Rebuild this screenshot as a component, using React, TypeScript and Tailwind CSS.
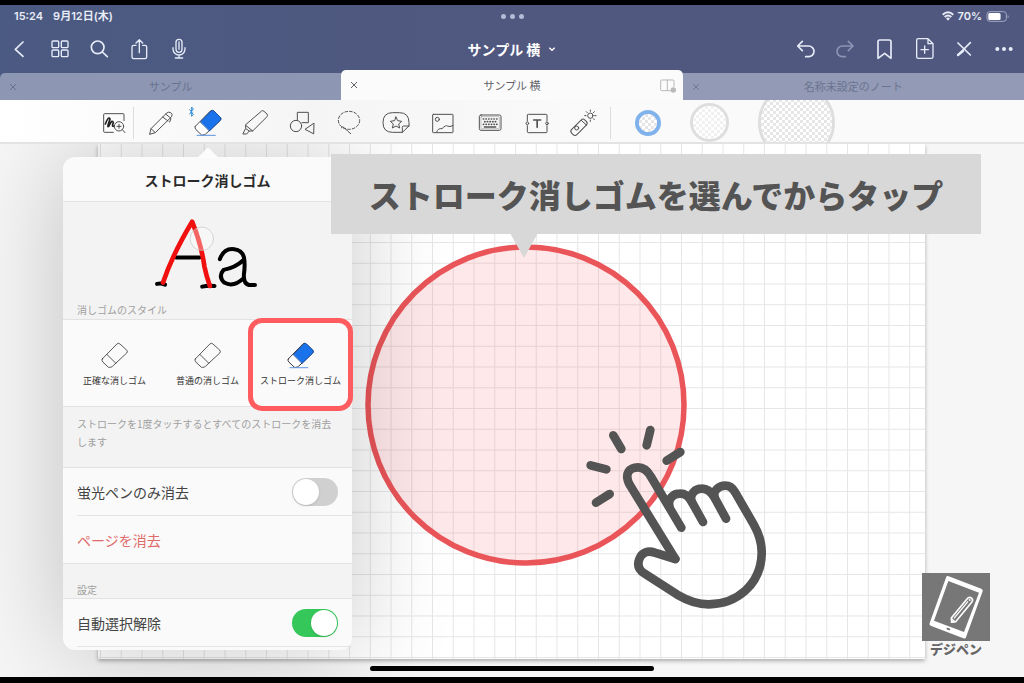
import React from "react";

type IconProps = { box: string; className?: string; children: React.ReactNode; width?: number };

function Icon({ box, className = "size-8", width = 3, children }: IconProps) {
  return (
    <svg
      viewBox={box}
      className={className}
      fill="none"
      stroke="currentColor"
      strokeWidth={width}
      strokeLinecap="round"
      strokeLinejoin="round"
      aria-hidden="true"
    >
      {children}
    </svg>
  );
}

function NavButton({ label, dim, children }: { label: string; dim?: boolean; children: React.ReactNode }) {
  return (
    <button
      type="button"
      aria-label={label}
      className={`flex h-8 w-10 items-center justify-center ${dim ? "text-[#8b94b3]" : "text-[#e6ecf8]"}`}
    >
      {children}
    </button>
  );
}

function StatusBar() {
  return (
    <div className="grid h-[22px] grid-cols-3 items-center px-3.5 font-['Inter','Noto_Sans_CJK_JP',sans-serif] text-[11px] font-semibold text-[#e8ecf6]">
      <div className="flex gap-2.5">
        <span>15:24</span>
        <span>9月12日(木)</span>
      </div>
      <div className="flex justify-center gap-1">
        <i className="size-[5px] rounded-full bg-[#b4bbd6]" />
        <i className="size-[5px] rounded-full bg-[#b4bbd6]" />
        <i className="size-[5px] rounded-full bg-[#b4bbd6]" />
      </div>
      <div className="flex items-center justify-end gap-1">
        <svg viewBox="0 0 36 28" className="h-[10px] w-3" fill="none" stroke="currentColor" strokeWidth="6">
          <path d="M2 10Q18-4 34 10M8 17Q18 8 28 17" />
          <path d="M12 21Q18 16 24 21L18 28Z" fill="currentColor" stroke="none" />
        </svg>
        <span>70%</span>
        <svg viewBox="0 0 72 34" className="h-[11px] w-6" fill="none">
          <rect x="2" y="2" width="60" height="30" rx="9" stroke="#a3abc7" strokeWidth="3" />
          <rect x="6" y="6" width="38" height="22" rx="5" fill="#fff" />
          <path d="M66 12Q72 17 66 22Z" fill="#a3abc7" />
        </svg>
      </div>
    </div>
  );
}

function NavBar() {
  return (
    <nav className="grid h-[43px] grid-cols-3 items-center">
      <div className="flex">
        <NavButton label="戻る">
          <Icon box="14 102 90 90" width={5} className="size-[30px]"><path d="M68 126L45 148L68 169" /></Icon>
        </NavButton>
        <NavButton label="一覧">
          <Icon box="134 102 90 90" width={4} className="size-[30px]">
            <rect x="155" y="123" width="20" height="20" rx="3" />
            <rect x="183" y="123" width="20" height="20" rx="3" />
            <rect x="155" y="150" width="20" height="20" rx="3" />
            <rect x="183" y="150" width="20" height="20" rx="3" />
          </Icon>
        </NavButton>
        <NavButton label="検索">
          <Icon box="255 102 90 90" width={5} className="size-[30px]">
            <circle cx="293" cy="142" r="19" />
            <path d="M307 156L322 170" />
          </Icon>
        </NavButton>
        <NavButton label="共有">
          <Icon box="375 102 90 90" width={4} className="size-[30px]">
            <path d="M408 136H401Q396 136 396 141V171Q396 176 401 176H435Q440 176 440 171V141Q440 136 435 136H428M418 158V119M408 129L418 119L428 129" />
          </Icon>
        </NavButton>
        <NavButton label="録音">
          <Icon box="495 102 90 90" width={4} className="size-[30px]">
            <rect x="528" y="118" width="18" height="39" rx="9" />
            <path d="M519 143V147A18 18 0 0 0 555 147V143M537 165V173M526 174H548M537 126V148" />
          </Icon>
        </NavButton>
      </div>
      <button type="button" className="flex items-center justify-center gap-2 justify-self-center text-[14px] leading-5 font-bold text-white">
        <span>サンプル 横</span>
        <svg viewBox="0 0 12 12" className="size-2" fill="none" stroke="currentColor" strokeWidth="2"><path d="M2 4L6 8L10 4" /></svg>
      </button>
      <div className="flex justify-end">
        <NavButton label="取り消す">
          <Icon box="328 102 90 90" width={5} className="size-[30px]">
            <path d="M368 124L354 138L368 152M355 138H387A16 16 0 0 1 387 170H378" />
          </Icon>
        </NavButton>
        <NavButton label="やり直す" dim>
          <Icon box="448 102 90 90" width={5} className="size-[30px]">
            <path d="M506 124L520 138L506 152M519 138H488A16 16 0 0 0 488 170H497" />
          </Icon>
        </NavButton>
        <NavButton label="ブックマーク">
          <Icon box="568 102 90 90" width={5} className="size-[30px]">
            <path d="M595 125Q595 120 600 120H629Q634 120 634 125V175L615 160L595 175Z" />
          </Icon>
        </NavButton>
        <NavButton label="ページを追加">
          <Icon box="688 102 90 90" width={4} className="size-[30px]">
            <path d="M745 116H716Q711 116 711 121V170Q711 175 716 175H755Q760 175 760 170V131L745 116V131H760M735 138V160M724 149H746" />
          </Icon>
        </NavButton>
        <NavButton label="ツールを閉じる">
          <Icon box="808 102 90 90" width={5} className="size-[30px]">
            <path d="M835 129L872 165M872 128L835 165" />
            <path d="M850 153L835 165" strokeWidth="7" />
          </Icon>
        </NavButton>
        <NavButton label="その他">
          <Icon box="928 102 90 90" className="size-[30px]">
            <g fill="currentColor" stroke="none">
              <circle cx="953" cy="147" r="6" /><circle cx="973" cy="147" r="6" /><circle cx="993" cy="147" r="6" />
            </g>
          </Icon>
        </NavButton>
      </div>
    </nav>
  );
}

function Tab({ title, active, first }: { title: string; active?: boolean; first?: boolean }) {
  const look = active
    ? "h-[30px] rounded-t-[5px] bg-[#fbfbfb] text-[#5f6268]"
    : first
      ? "h-[27px] rounded-tl-[5px] bg-[#8d97b3] text-[#68728f]"
      : "h-[27px] bg-[#929ab5] text-[#6b7490]";
  return (
    <div className={`grid grid-cols-[24px_1fr_24px] items-center text-[11px] leading-4 ${look}`}>
      <button type="button" aria-label={`${title}を閉じる`} className="flex justify-center pl-0.5">
        <svg viewBox="0 0 8 8" className="size-2" fill="none" stroke="currentColor" strokeWidth="1"><path d="M1 1L7 7M7 1L1 7" /></svg>
      </button>
      <a href="#" className="pb-px text-center">{title}</a>
      {active && (
        <button type="button" aria-label="分割表示" className="text-[#b9b9b9]">
          <Icon box="952 230 54 48" className="h-4 w-[18px]">
            <path d="M988 271H960Q957 271 957 268V242Q957 239 960 239H994Q997 239 997 242V258M977 239V271" />
            <circle cx="995" cy="269" r="8" fill="currentColor" stroke="none" />
          </Icon>
        </button>
      )}
    </div>
  );
}

function EraserShape({ filled }: { filled?: boolean }) {
  return (
    <>
      <path d="M0 50L45 4Q49 0 54 4L75 23Q79 28 75 32L31 73Q28 76 22 76H19L2 60Q-3 55 0 50Z" fill={filled ? "#fff" : "none"} />
      {filled && <path d="M16 36L47 4Q51 0 56 4L75 23Q79 28 75 32L43 63Z" fill="#1a73ea" stroke="#1c4f9c" />}
      {!filled && <path d="M14 36L41 63" />}
      {filled && <path d="M5 77H60" stroke="#5c94e2" strokeWidth="3" />}
    </>
  );
}

function ToolButton({ label, children }: { label: string; children: React.ReactNode }) {
  return (
    <button type="button" aria-label={label} className="flex h-full w-[47px] shrink-0 items-center justify-center">
      {children}
    </button>
  );
}

function Checker({ size, id, tone }: { size: number; id: string; tone: string }) {
  return (
    <svg viewBox={`0 0 ${size} ${size}`} width={size} height={size} aria-hidden="true">
      <defs>
        <pattern id={id} width="6" height="6" patternUnits="userSpaceOnUse">
          <rect width="6" height="6" fill="#fff" />
          <path d="M0 0H3V3H0ZM3 3H6V6H3Z" fill={tone} />
        </pattern>
      </defs>
      <circle cx={size / 2} cy={size / 2} r={size / 2} fill={`url(#${id})`} />
    </svg>
  );
}

function Toolbar() {
  return (
    <div className="relative z-10 flex h-11 items-center overflow-hidden border-b-2 border-[#e3e3e3] bg-linear-to-r from-white via-[#f5f5f5] via-30% to-[#fafafa] to-60% pt-[3px] pl-[90px] text-[#505050]">
      <button type="button" aria-label="ズーム" className="flex h-full w-[43px] shrink-0 items-center justify-center pl-1">
        <Icon box="294 321 96 96">
          <path d="M340 397H314Q311 397 311 394V344Q311 341 314 341H369Q372 341 372 344V362" />
          <path d="M316 372Q326 346 330 358Q319 387 327 378Q336 356 340 368Q334 382 342 378" stroke="#222" strokeWidth="5" />
          <circle cx="357" cy="379" r="14" />
          <path d="M367 389L375 398M351 379H363M357 373V385" />
        </Icon>
      </button>
      <div className="mr-[3px] h-8 w-px shrink-0 bg-[#dcdcdc]" />
      <ToolButton label="ペン">
        <Icon box="434 321 96 96">
          <path d="M448 402L452 386L498 340Q504 334 511 338Q518 342 514 350L466 397ZM496 342L512 355L508 366M452 386L464 397M487 351L503 363" />
        </Icon>
      </ToolButton>
      <ToolButton label="消しゴム">
        <Icon box="576 321 96 96" className="size-8 overflow-visible">
          <g transform="translate(586 329)"><EraserShape filled /></g>
          <path d="M569 329L580 343L575 349V321L580 327L569 342" stroke="#2e8bd8" />
        </Icon>
      </ToolButton>
      <ToolButton label="蛍光ペン">
        <Icon box="717 321 96 96">
          <path d="M729 401L737 385V374L785 333Q788 330 792 334L801 342Q804 346 801 350L758 393H748L741 401ZM737 376L758 393M739 387L748 393" />
        </Icon>
      </ToolButton>
      <ToolButton label="図形">
        <Icon box="858 321 96 96">
          <path d="M892 360V337H925V368H906M941 370L915 388L940 401Z" />
          <circle cx="888" cy="378" r="17" />
        </Icon>
      </ToolButton>
      <ToolButton label="なげなわ">
        <Icon box="-21 321 96 96">
          <ellipse cx="27" cy="361" rx="32" ry="27" strokeDasharray="8 6" />
          <path d="M4 383Q8 377 14 384Q22 393 32 401" />
        </Icon>
      </ToolButton>
      <ToolButton label="ステッカー">
        <Icon box="120 321 96 96">
          <path d="M187 397H158Q129 397 129 368Q129 338 158 338H178Q207 338 207 368V378L187 397V382Q187 378 191 378H207" />
          <path d="M168 351L173 362L185 364L176 372L179 384L168 378L157 384L160 372L151 364L163 362Z" />
        </Icon>
      </ToolButton>
      <ToolButton label="画像">
        <Icon box="261 321 96 96">
          <rect x="278" y="343" width="61" height="55" rx="2" />
          <circle cx="292" cy="358" r="6" />
          <path d="M290 396Q294 384 306 386Q318 374 322 378Q329 382 339 377" />
        </Icon>
      </ToolButton>
      <ToolButton label="キーボード">
        <Icon box="403 321 96 96">
          <rect x="419" y="345" width="65" height="46" rx="5" />
          <rect x="424" y="350" width="55" height="36" rx="2" strokeWidth="1" />
          <path d="M431 357H475M435 365H475M431 373H475" strokeDasharray="1 7" strokeWidth="5" />
          <path d="M434 381H468" strokeWidth="4" />
        </Icon>
      </ToolButton>
      <ToolButton label="テキスト">
        <Icon box="542 321 96 96">
          <path d="M561 363V345Q561 343 564 343H617Q620 343 620 345V363M561 377V395Q561 398 564 398H617Q620 398 620 395V377" />
          <circle cx="561" cy="370" r="4" /><circle cx="620" cy="370" r="4" />
          <path d="M580 360H601M590.500 360V382" strokeWidth="5" />
        </Icon>
      </ToolButton>
      <ToolButton label="レーザーポインター">
        <Icon box="687 321 96 96">
          <rect x="692" y="371" width="56" height="22" rx="8" transform="rotate(-45 720 382)" />
          <circle cx="713" cy="384" r="6" />
          <path d="M727 361L743 376" />
          <circle cx="754" cy="347" r="8" />
          <path d="M754 330V334M766 335L763 338M771 347H767M766 359L763 356M742 335L745 338M737 347H741M754 364V360" />
        </Icon>
      </ToolButton>
      <div className="mr-6 ml-[3px] h-8 w-px shrink-0 bg-[#dcdcdc]" />
      <div className="flex shrink-0 items-center gap-[29px]">
        <button type="button" aria-label="サイズ小" className="rounded-full border-4 border-[#80b3ec]"><Checker size={18} id="check-s" tone="#e6e6e6" /></button>
        <button type="button" aria-label="サイズ中" className="rounded-full border-[3px] border-[#dedede]"><Checker size={33} id="check-m" tone="#f1f1f1" /></button>
        <button type="button" aria-label="サイズ大" className="rounded-full border-[3px] border-[#dedede]"><Checker size={71} id="check-l" tone="#e6e6e6" /></button>
      </div>
    </div>
  );
}

function Switch({ id, on }: { id: string; on?: boolean }) {
  return (
    <input
      id={id}
      type="checkbox"
      role="switch"
      defaultChecked={on}
      className="h-7 w-[46px] appearance-none rounded-full bg-[#d0d0d0] p-px before:block before:size-[26px] before:rounded-full before:bg-white before:shadow-sm checked:bg-[#35c759] checked:before:ml-[18px]"
    />
  );
}

function EraserOption({ label, selected }: { label: string; selected?: boolean }) {
  return (
    <label className="flex flex-col items-center gap-1 text-[9px] leading-4 whitespace-nowrap text-[#333]">
      <input type="radio" name="eraser-style" defaultChecked={selected} className="sr-only" />
      <Icon box="-4 -4 86 84" className="size-7" width={selected ? 3 : 2.5}>
        <EraserShape filled={selected} />
      </Icon>
      {label}
    </label>
  );
}

function EraserPopover() {
  return (
    <section className="absolute top-[13px] left-[63px] w-[289px] rounded-xl bg-[#fafafa] shadow-[0_0_100px_rgba(0,0,0,0.22)]">
      <svg viewBox="0 0 24 12" className="absolute -top-[11px] left-[133px] h-3 w-6" fill="#fcfcfc"><path d="M0 12Q4 10 9 4Q12 0 15 4Q20 10 24 12Z" /></svg>
      <h2 className="h-[45px] border-b border-[#e2e2e2] pt-3 text-center text-[14px] leading-[22px] font-bold text-[#2a2a2a]">ストローク消しゴム</h2>
      <div className="flex h-[117px] flex-col bg-[#f3f3f3]">
        <svg viewBox="290 225 350 230" className="mt-[13px] ml-[83px] h-[77px] w-[117px] shrink-0" fill="none" strokeLinecap="round" strokeLinejoin="round">
          <path d="M380 352H450M323 431Q336 428 347 433M458 439Q475 435 495 437" stroke="#000" strokeWidth="12" />
          <path d="M511 357Q523 323 554 327Q578 330 583 352Q587 372 583 402Q581 430 598 434L616 434M580 361Q558 382 522 389Q505 409 524 427Q552 443 583 413" stroke="#000" strokeWidth="12" />
          <path d="M341 427Q368 345 428 245Q456 315 465 380Q470 405 481 437" stroke="#f01010" strokeWidth="14" />
          <circle cx="457" cy="296" r="35" fill="#fff" fillOpacity="0.35" stroke="#c5c5c5" strokeWidth="2" />
        </svg>
        <h3 className="mt-2.5 pl-3.5 text-[10px] leading-4 text-[#a0a0a0]">消しゴムのスタイル</h3>
      </div>
      <div className="grid h-[87px] grid-cols-3 border-t border-[#e2e2e2] bg-[#fafafa] px-[5px] pt-[21px]">
        <EraserOption label="正確な消しゴム" />
        <EraserOption label="普通の消しゴム" />
        <EraserOption label="ストローク消しゴム" selected />
      </div>
      <p className="h-[62px] border-y border-[#e2e2e2] bg-[#f3f3f3] pt-2 pr-3 pl-3.5 text-[10px] leading-[18px] text-[#a0a0a0]">
        ストロークを1度タッチするとすべてのストロークを消去します
      </p>
      <div className="pl-3.5 text-[14px] leading-5 text-[#444]">
        <div className="flex h-12 items-center justify-between border-b border-[#e4e4e4] pr-3.5">
          <label htmlFor="highlighter-only">蛍光ペンのみ消去</label>
          <Switch id="highlighter-only" />
        </div>
        <button type="button" className="flex h-[47px] items-center text-[#df6b6b]">ページを消去</button>
      </div>
      <h3 className="h-9 border-y border-[#e2e2e2] bg-[#f3f3f3] pt-[18px] pl-3.5 text-[10px] leading-4 text-[#a0a0a0]">設定</h3>
      <div className="pb-[3px] pl-3.5 text-[14px] leading-5 text-[#444]">
        <div className="flex h-12 items-center justify-between border-b border-[#e4e4e4] pr-3.5">
          <label htmlFor="auto-deselect">自動選択解除</label>
          <Switch id="auto-deselect" on />
        </div>
      </div>
      <div className="absolute top-[161px] left-[185px] h-[93px] w-[105px] rounded-[14px] border-[5px] border-[#ff5c5f]" />
    </section>
  );
}

function Paper() {
  return (
    <div className="flex flex-1 bg-white shadow-[0_2px_4px_rgba(0,0,0,0.3)]">
      <svg className="w-full" aria-hidden="true">
        <defs>
          <pattern id="grid" x="2" y="15" width="20.75" height="20.75" patternUnits="userSpaceOnUse">
            <path d="M0.500 0V20.750M0 0.500H20.750" stroke="#e6e6e6" strokeWidth="1" />
          </pattern>
        </defs>
        <rect width="100%" height="100%" fill="url(#grid)" />
      </svg>
    </div>
  );
}

function TapHand() {
  return (
    <svg viewBox="0 0 660 630" className="absolute top-[266px] left-[570px] h-[210px] w-[220px]" fill="none" stroke="#545454" strokeWidth="26" strokeLinecap="round" strokeLinejoin="round" aria-hidden="true">
      <path d="M130 76L154 117M241 60L230 106M331 126L290 152M62 166L109 178M119 252L78 278" />
      <path d="M316 447L180 226C160 190 180 172 204 172C220 172 232 181 242 199L334 353" />
      <path d="M298 288C293 264 312 251 329 251C345 250 356 259 364 273L399 336" />
      <path d="M364 273C359 250 377 236 395 236C412 235 423 246 432 260L468 326" />
      <path d="M434 262C427 244 446 227 466 227C480 227 489 235 496 248L551 343C571 378 576 404 575 432C572 524 500 583 416 583C379 583 351 571 322 554L224 491C206 480 201 465 208 447C216 426 235 421 254 428L316 447" />
    </svg>
  );
}

function Callout() {
  return (
    <div className="absolute top-[10px] left-[331px] flex h-20 w-[650px] items-center justify-center bg-[#d8d8d8]">
      <p className="text-[32px] leading-10 font-black whitespace-nowrap text-[#545454]">ストローク消しゴムを選んでからタップ</p>
      <svg viewBox="0 0 28 25" className="absolute top-[79px] left-[179px] h-[25px] w-7" fill="#d8d8d8"><path d="M0 0H28L14 25Z" /></svg>
    </div>
  );
}

function Brand() {
  return (
    <div className="absolute right-[34px] bottom-5 flex w-[68px] flex-col items-center">
      <svg viewBox="125 37 204 204" className="size-[68px] bg-[#777]" aria-hidden="true">
        <path d="M198 48Q200 45 205 47L303 84Q309 87 307 92L257 230Q255 235 249 233L151 195Q146 193 148 187Z" fill="#fff" />
        <path d="M204 61L296 96L251 214L161 180Z" fill="#777" />
        <ellipse cx="204" cy="205" rx="6" ry="3" fill="#777" transform="rotate(20 204 205)" />
        <path d="M214 184L213 172L260 115Q266 107 273 112Q280 117 274 125L226 183Z" fill="none" stroke="#fff" strokeWidth="5" />
        <path d="M221 173L263 122M214 184L216 176L223 182Z" stroke="#fff" strokeWidth="4" />
        <circle cx="268" cy="118" r="3" fill="#fff" />
      </svg>
      <span className="text-[13px] leading-4 font-black text-[#666]">デジペン</span>
    </div>
  );
}

export default function App() {
  return (
    <div className="flex min-h-screen flex-col border-t-[5px] border-b-[6px] border-black bg-[#f6f6f6] font-['Noto_Sans_CJK_JP',sans-serif]">
      <header className="bg-linear-to-r from-[#4b5a82] to-[#50587f] to-50%">
        <StatusBar />
        <NavBar />
        <div className="grid grid-cols-3 items-end">
          <Tab title="サンプル" first />
          <Tab title="サンプル 横" active />
          <Tab title="名称未設定のノート" />
        </div>
      </header>
      <Toolbar />
      <main className="relative flex flex-1 flex-col overflow-hidden pr-[99px] pb-[18px] pl-[98px]">
        <Paper />
        <svg viewBox="0 0 322 322" className="absolute top-[100px] left-[365px] size-[322px]" aria-hidden="true">
          <circle cx="161" cy="161" r="158" fill="#ff5c62" fillOpacity="0.14" stroke="#ea5559" strokeWidth="5.500" />
        </svg>
        <EraserPopover />
        <Callout />
        <TapHand />
        <Brand />
        <div className="absolute bottom-1.5 left-1/2 h-[5px] w-[284px] -translate-x-1/2 rounded-full bg-black" />
      </main>
    </div>
  );
}
